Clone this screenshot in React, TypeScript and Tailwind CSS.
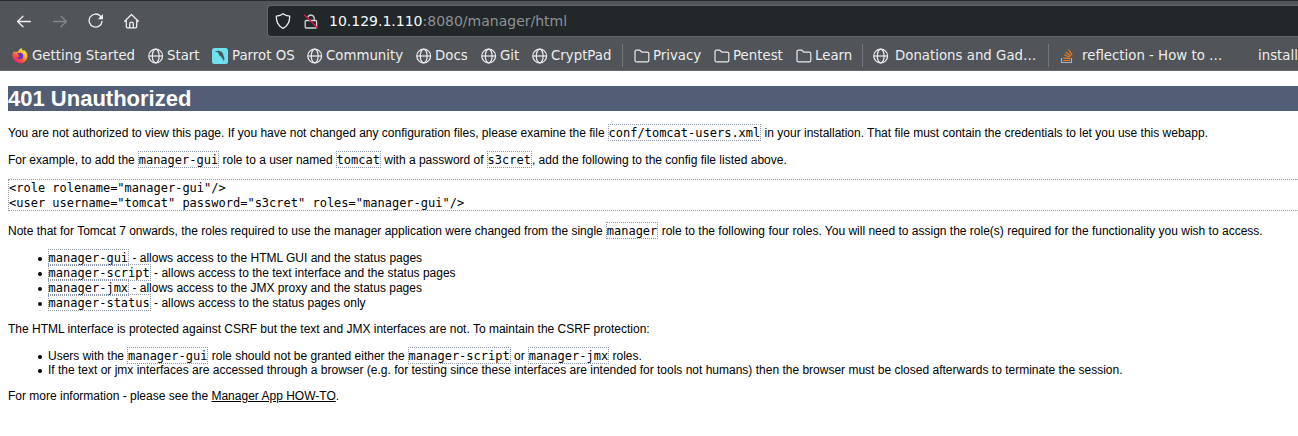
import type { ReactNode } from "react";

const Code = ({ children }: { children: ReactNode }) => (
  <code className="-ml-[0.4px] border border-dotted border-[#8f98ab] pt-px font-['DejaVu_Sans_Mono',monospace] text-[12px] leading-[14px]">{children}</code>
);

const Item = ({ children }: { children: ReactNode }) => (
  <li className="before:mr-[6px] before:-ml-[10px] before:inline-block before:size-[4px] before:rounded-full before:bg-black before:align-[1px] before:content-['']">{children}</li>
);

const Globe = () => (
  <svg className="mt-px size-4 shrink-0" viewBox="0 0 16 16" fill="none" stroke="#e8eaeb" strokeWidth="1.250">
    <circle cx="7.700" cy="8" r="6.900" />
    <ellipse cx="7.700" cy="8" rx="3.400" ry="6.900" />
    <path d="M.8 8h13.800" />
  </svg>
);

const Folder = () => (
  <svg className="size-4 shrink-0" viewBox="0 0 16 16" fill="none" stroke="#e8eaeb" strokeWidth="1.200" strokeLinejoin="round">
    <path d="M2.400 2.200h3.400l2.200 2h5.400a1.400 1.400 0 0 1 1.400 1.400v6.800a1.400 1.400 0 0 1-1.400 1.400h-11A1.400 1.400 0 0 1 1 12.400V3.600a1.400 1.400 0 0 1 1.400-1.400z" />
  </svg>
);

const Firefox = () => (
  <svg className="size-4 shrink-0" viewBox="0 0 16 16">
    <defs>
      <linearGradient id="flame" x1="0.85" y1="0.1" x2="0.2" y2="0.95">
        <stop offset="0" stopColor="#fff44f" />
        <stop offset="0.35" stopColor="#ffb02e" />
        <stop offset="0.65" stopColor="#ff5a36" />
        <stop offset="1" stopColor="#e31587" />
      </linearGradient>
    </defs>
    <path d="M9.500 0c.3 1.500 1 2.200 2 3 .3-.500.2-1 .1-1.300C14 3 15.700 5.500 15.500 8.600A7.600 7.600 0 0 1 .4 8.500C.3 6 1 4 2.200 2.700c0 .7.200 1.200.6 1.600C3.600 3.800 5 3.700 6 4c.5-2 1.700-3.300 3.500-4z" fill="url(#flame)" />
    <path d="M5 5.800c1.500-1.500 4.300-1.600 5.700.2 1.400 2 .4 5-2.300 5.300-2 .2-3.500-.9-3.700-2.300.8.300 1.900.1 2.600-.8-.9-.2-1.100-1-.6-1.500-.6-.3-1.200-.5-1.700-.9z" fill="#6b32c9" />
  </svg>
);

const Parrot = () => (
  <svg className="size-4 shrink-0" viewBox="0 0 16 16">
    <rect width="16" height="16" rx="2.500" fill="#6fe0ee" />
    <path d="M2.800 3.200C5.500 2.200 8.500 2.500 10.200 4.500c1.500 2 1.500 4.600 2.700 7.300l-1.100-.9.300 2.600C10.800 11.500 10 9.300 8.300 7.500l.2 1.300C7.200 7.500 6.700 5.800 6 4.400c-1-.5-2.200-.7-3.200-1.200z" fill="#45595f" />
  </svg>
);

const StackOverflow = () => (
  <svg className="mt-px size-4 shrink-0" viewBox="0 0 16 16" fill="none">
    <path d="M1.500 10v4.500h10V10" stroke="#a9b3bb" strokeWidth="1.100" />
    <path d="M3.200 12.500h6.800M3.400 9.800l6.600.9M4.200 6.800l6.200 2.400M5.800 4.200l5.300 3.900M8.500 1.500l3.600 5.300" stroke="#ef7a20" strokeWidth="1.200" />
  </svg>
);

const bookmarks: { label: string; icon: ReactNode; cell: string }[] = [
  { label: "Getting Started", icon: <Firefox />, cell: "w-[136px] gap-1" },
  { label: "Start", icon: <Globe />, cell: "w-[64px] gap-[3px]" },
  { label: "Parrot OS", icon: <Parrot />, cell: "w-[95px] gap-1" },
  { label: "Community", icon: <Globe />, cell: "w-[109px] gap-[3px]" },
  { label: "Docs", icon: <Globe />, cell: "w-[65px] gap-[3px]" },
  { label: "Git", icon: <Globe />, cell: "w-[51px] gap-[3px]" },
  { label: "CryptPad", icon: <Globe />, cell: "w-[90px] gap-[3px]" },
];
const folders = [
  { label: "Privacy", cell: "w-[80px]" },
  { label: "Pentest", cell: "w-[82px]" },
  { label: "Learn", cell: "w-[67px]" },
];

const Divider = () => <div className="h-[23px] w-px shrink-0 bg-[#74777a]" />;

function Toolbar() {
  return (
    <div className="flex h-[40px] items-center">
      <div className="flex w-[267px] shrink-0 items-center gap-5 pl-4">
        <svg className="size-4" viewBox="0 0 16 16" fill="none" stroke="#eef0f1" strokeWidth="1.300" strokeLinecap="round" strokeLinejoin="round"><path d="M14.400 8.500H1.500M7 3.200L1.500 8.500 7 13.800" /></svg>
        <svg className="size-4" viewBox="0 0 16 16" fill="none" stroke="#85888b" strokeWidth="1.300" strokeLinecap="round" strokeLinejoin="round"><path d="M1.600 8.500h12.900M9 3.200L14.500 8.500 9 13.800" /></svg>
        <svg className="size-4" viewBox="0 0 16 16" fill="none" stroke="#eef0f1" strokeWidth="1.300" strokeLinecap="round"><path d="M12.500 3.200A6.500 6.500 0 1 0 14.100 8.300" /><path d="M15 1v5.200H9.800z" fill="#eef0f1" stroke="none" /></svg>
        <svg className="size-4" viewBox="0 0 16 16" fill="none" stroke="#eef0f1" strokeWidth="1.300" strokeLinecap="round" strokeLinejoin="round"><path d="M.7 8.300L7.500 1.500l6.800 6.800M2.300 7.500v6a1.300 1.300 0 0 0 1.300 1.300h7.800a1.300 1.300 0 0 0 1.300-1.300v-6M5.700 14.500v-3.500a1.800 1.800 0 0 1 3.600 0v3.500" /></svg>
      </div>
      <div className="flex h-[32px] flex-1 items-center rounded-l-[4px] border border-r-0 border-[#63666a] bg-[#22272a] pl-[7px]">
        <svg className="mr-3 size-4" viewBox="0 0 16 16" fill="none" stroke="#e8eaeb" strokeWidth="1.300" strokeLinejoin="round"><path d="M8 .8C6.300 2.300 4 3 1.300 3.100c-.1 5.500 1.700 9.900 6.700 12.200 5-2.300 6.800-6.700 6.700-12.200C12 3 9.700 2.300 8 .8z" /></svg>
        <svg className="mr-[10px] size-4" viewBox="0 0 16 16" fill="none"><path d="M4.800 4.300A3.300 3.300 0 0 1 11.200 4.800V7.500M3.200 7.500h9.400a1 1 0 0 1 1 1V14a1 1 0 0 1-1 1H3.200a1 1 0 0 1-1-1V8.500a1 1 0 0 1 1-1z" stroke="#d4d6d7" strokeWidth="1.300" /><path d="M1.300 1.700l13.500 13.500" stroke="#e0144a" strokeWidth="1.400" /></svg>
        <span className="text-[14px] text-[#8d9295]"><span className="text-[#f8f9fa]">10.129.1.110</span>:8080/manager/html</span>
      </div>
    </div>
  );
}

export default function App() {
  return (
    <div className="h-[436px] w-full overflow-hidden bg-white font-['Liberation_Sans',Arial,sans-serif] text-[12px] leading-[14px] text-black">
      <header className="h-[71px] overflow-hidden border-y border-t-[#292c2f] border-b-[#66696c] bg-[#515458] font-['DejaVu_Sans',sans-serif] text-[13.333px] leading-4 text-[#eceeef]">
        <Toolbar />
        <nav className="flex h-[29px] items-center whitespace-nowrap pl-3">
          {bookmarks.map((b) => <div key={b.label} className={`flex shrink-0 items-center ${b.cell}`}>{b.icon}<span>{b.label}</span></div>)}
          <Divider />
          <div className="flex shrink-0 pl-[11px]">
            {folders.map((f) => <div key={f.label} className={`flex shrink-0 items-center gap-[3px] ${f.cell}`}><Folder />{f.label}</div>)}
          </div>
          <div className="-ml-px"><Divider /></div>
          <div className="flex w-[185px] shrink-0 items-center gap-[6px] pl-[10px]"><Globe />Donations and Gad…</div>
          <Divider />
          <div className="flex w-[209px] shrink-0 items-center gap-[6px] pl-[11px]"><StackOverflow />reflection - How to …</div>
          <span>install</span>
        </nav>
      </header>
      <main className="pl-2 pt-[15px]">
        <h1 className="h-[25px] bg-[#525d76] text-[22px] leading-[25px] font-bold text-white">401 Unauthorized</h1>
        <p className="mt-[15px]">You are not authorized to view this page. If you have not changed any configuration files, please examine the file <Code>conf/tomcat-users.xml</Code> in your installation. That file must contain the credentials to let you use this webapp.</p>
        <p className="mt-[13px]">For example, to add the <Code>manager-gui</Code> role to a user named <Code>tomcat</Code> with a password of <Code>s3cret</Code>, add the following to the config file listed above.</p>
        <pre className="mt-[12px] h-[32px] border border-r-0 border-dotted border-[#8f98ab] pt-px font-['DejaVu_Sans_Mono',monospace] text-[12px] leading-[15px]">{'<role rolename="manager-gui"/>\n<user username="tomcat" password="s3cret" roles="manager-gui"/>'}</pre>
        <p className="mt-[13px]">Note that for Tomcat 7 onwards, the roles required to use the manager application were changed from the single <Code>manager</Code> role to the following four roles. You will need to assign the role(s) required for the functionality you wish to access.</p>
        <ul className="mt-[13px] pl-10 leading-[15px]">
          <Item><Code>manager-gui</Code> - allows access to the HTML GUI and the status pages</Item>
          <Item><Code>manager-script</Code> - allows access to the text interface and the status pages</Item>
          <Item><Code>manager-jmx</Code> - allows access to the JMX proxy and the status pages</Item>
          <Item><Code>manager-status</Code> - allows access to the status pages only</Item>
        </ul>
        <p className="mt-[11px]">The HTML interface is protected against CSRF but the text and JMX interfaces are not. To maintain the CSRF protection:</p>
        <ul className="mt-[13px] pl-10">
          <Item>Users with the <Code>manager-gui</Code> role should not be granted either the <Code>manager-script</Code> or <Code>manager-jmx</Code> roles.</Item>
          <Item>If the text or jmx interfaces are accessed through a browser (e.g. for testing since these interfaces are intended for tools not humans) then the browser must be closed afterwards to terminate the session.</Item>
        </ul>
        <p className="mt-[12px]">For more information - please see the <a href="#" className="underline">Manager App HOW-TO</a>.</p>
      </main>
    </div>
  );
}
